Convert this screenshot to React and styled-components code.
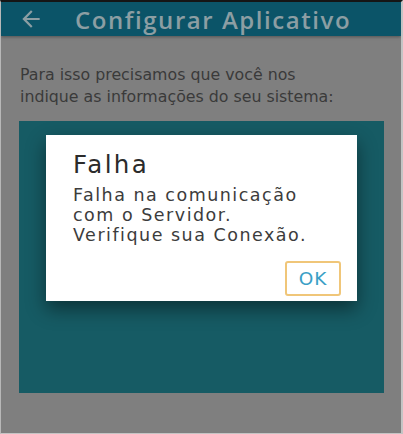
import styled, { createGlobalStyle } from 'styled-components'
import { MdArrowBack } from 'react-icons/md'

const GlobalStyle = createGlobalStyle`
  html, body { margin: 0; padding: 0; }
  body { font-family: "DejaVu Sans", "Open Sans", sans-serif; }
`

const Screen = styled.div`
  width: 403px;
  height: 434px;
  box-sizing: border-box;
  background: #7f7f7f;
  border-top: 2px solid #151515;
  border-left: 1px solid #b8b8b8;
  border-right: 2px solid #c4c4c4;
  border-bottom: 1px solid #c4c4c4;
  overflow: hidden;
  display: flex;
  flex-direction: column;
`

const AppBar = styled.header`
  height: 34px;
  background: #0b5468;
  display: flex;
  align-items: center;
  gap: 31px;
  padding-left: 17px;
  color: #8c9ea3;
  box-shadow: 0 1px 3px rgba(0, 0, 0, 0.35);
`

const Title = styled.h1`
  margin: 0;
  font-family: "Open Sans", sans-serif;
  font-size: 24px;
  font-weight: 600;
  letter-spacing: 1.55px;
`

const Content = styled.main`
  flex: 1;
  display: flex;
  flex-direction: column;
  padding: 28px 17px 40px 18px;
`

const Intro = styled.p`
  margin: 0 0 13px 1px;
  font-size: 15.8px;
  line-height: 22px;
  color: #3a3a3a;
`

const Panel = styled.section`
  flex: 1;
  background: #165b64;
  display: flex;
  justify-content: center;
  align-items: flex-start;
  padding-top: 14px;
`

const Dialog = styled.div`
  width: 311px;
  box-sizing: border-box;
  background: #ffffff;
  padding: 15px 16px 5px 27px;
  box-shadow: 0 8px 18px rgba(0, 0, 0, 0.45);
  display: flex;
  flex-direction: column;
`

const DialogTitle = styled.h2`
  margin: 0 0 5px;
  font-size: 24.5px;
  line-height: 30px;
  font-weight: 400;
  letter-spacing: 2.4px;
  color: #2b2b2b;
`

const DialogText = styled.p`
  margin: 0;
  font-size: 17.5px;
  line-height: 20px;
  letter-spacing: 1.5px;
  color: #3c3c3c;
`

const Actions = styled.div`
  display: flex;
  justify-content: flex-end;
  margin-top: 16px;
`

const OkButton = styled.button`
  background: #fff;
  border: 2px solid #f0c679;
  border-radius: 3px;
  color: #3a9fc6;
  font-family: inherit;
  font-size: 18.5px;
  letter-spacing: 0.8px;
  padding: 0;
  width: 56px;
  height: 35px;
`

export default function App() {
  return (
    <>
      <GlobalStyle />
      <Screen>
        <AppBar>
          <MdArrowBack size={26} />
          <Title>Configurar Aplicativo</Title>
        </AppBar>
        <Content>
          <Intro>
            Para isso precisamos que você nos
            <br />
            indique as informações do seu sistema:
          </Intro>
          <Panel>
            <Dialog>
              <DialogTitle>Falha</DialogTitle>
              <DialogText>
                Falha na comunicação
                <br />
                com o Servidor.
                <br />
                Verifique sua Conexão.
              </DialogText>
              <Actions>
                <OkButton>OK</OkButton>
              </Actions>
            </Dialog>
          </Panel>
        </Content>
      </Screen>
    </>
  )
}
